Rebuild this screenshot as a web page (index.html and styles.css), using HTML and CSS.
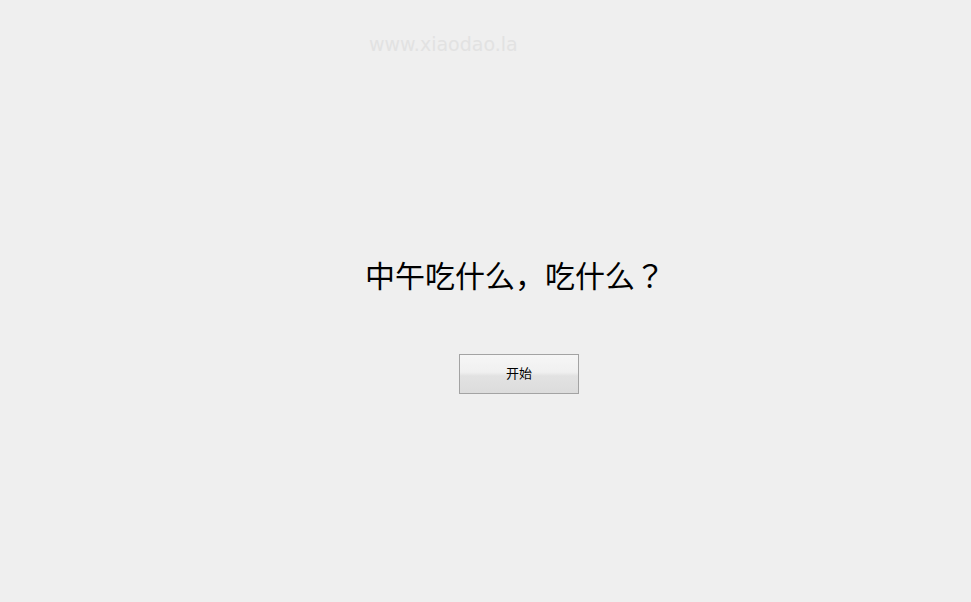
FILE: index.html
```html
<!DOCTYPE html>
<html lang="zh">
<head>
<meta charset="utf-8">
<title>中午吃什么</title>
<link rel="stylesheet" href="styles.css">
</head>
<body>
<div class="page">
  <div class="watermark">www.xiaodao.la</div>
  <h1 class="title">中午吃什么，吃什么？</h1>
  <div class="actions"><button class="start">开始</button></div>
</div>
</body>
</html>
```
FILE: styles.css
```css
html, body {
  margin: 0;
  padding: 0;
  height: 100%;
}
body {
  background: #efefef;
  font-family: "Liberation Sans", "Noto Sans CJK SC", sans-serif;
}
.page {
  display: flex;
  flex-direction: column;
  align-items: flex-start;
  padding-left: 365px;
  padding-top: 33px;
}
.watermark {
  margin-left: 4px;
  font-family: "DejaVu Sans", sans-serif;
  font-size: 19px;
  line-height: 22px;
  color: #e2e2e2;
}
.title {
  margin: 204px 0 0 0;
  font-family: "Noto Sans CJK JP", sans-serif;
  font-feature-settings: "locl" 0;
  font-weight: normal;
  font-size: 30px;
  line-height: 30px;
  color: #000;
  width: 300px;
  white-space: nowrap;
  text-spacing-trim: space-all;
}
.actions {
  margin-top: 65px;
  margin-left: 94px;
}
.start {
  width: 120px;
  height: 40px;
  border: 1px solid #a3a3a3;
  border-radius: 0;
  background: linear-gradient(#f6f6f6, #f0f0f0 45%, #e2e2e2 55%, #dcdcdc);
  font-family: "Noto Sans CJK SC", sans-serif;
  font-size: 13px;
  line-height: 16px;
  color: #000;
  padding: 0 0 2px 0;
  margin: 0;
}
```
